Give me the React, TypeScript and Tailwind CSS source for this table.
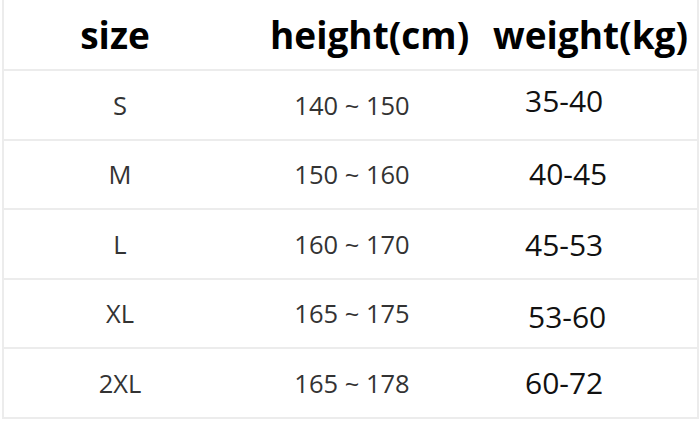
import React from 'react';

const rows = [
  { size: 'S', height: '140 ~ 150', weight: '35-40', wx: 'pl-[57px]', wy: '-translate-y-[4px]' },
  { size: 'M', height: '150 ~ 160', weight: '40-45', wx: 'pl-[61px]', wy: '-translate-y-[1px]' },
  { size: 'L', height: '160 ~ 170', weight: '45-53', wx: 'pl-[57px]', wy: 'translate-y-[1px]' },
  { size: 'XL', height: '165 ~ 175', weight: '53-60', wx: 'pl-[60px]', wy: 'translate-y-[3px]' },
  { size: '2XL', height: '165 ~ 178', weight: '60-72', wx: 'pl-[57px]', wy: 'translate-y-[0px]' },
];

const App: React.FC = () => {
  return (
    <div className="w-[700px] h-[422px] bg-white overflow-hidden">
      <div className="ml-[2px] w-[697px] border-l-2 border-r-2 border-[#ececec] [font-family:'Open_Sans',sans-serif]">
        <div className="h-[71px] flex items-center border-b-2 border-[#ececec] font-bold text-[37px] text-black">
          <div className="w-[222px] text-center">size</div>
          <div className="w-[267px] pl-[44px]">height(cm)</div>
          <div className="flex-1">weight(kg)</div>
        </div>
        {rows.map((r) => (
          <div key={r.size} className="h-[69.5px] flex items-center border-b-2 border-[#ececec]">
            <div className="w-[232px] text-center text-[25.5px] text-[#333]">{r.size}</div>
            <div className="w-[232px] text-center text-[25.5px] text-[#333]">{r.height}</div>
            <div className={`flex-1 text-[30px] text-[#111] ${r.wx} ${r.wy}`}>{r.weight}</div>
          </div>
        ))}
      </div>
    </div>
  );
};

export default App;
